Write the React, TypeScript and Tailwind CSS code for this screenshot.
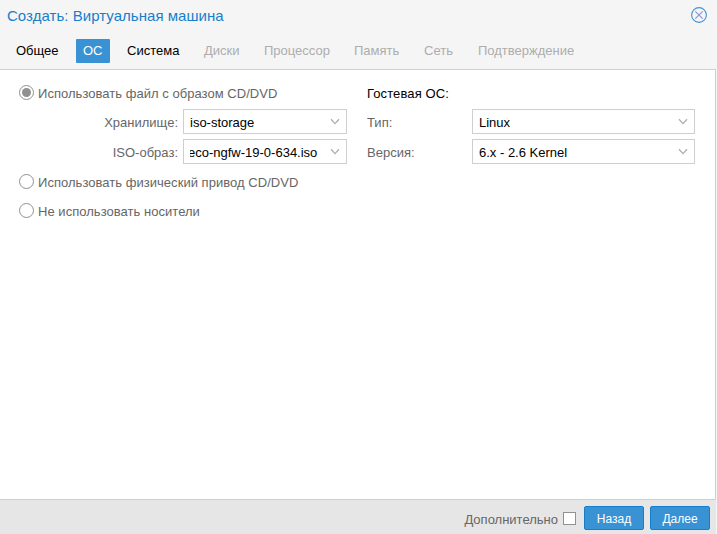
import React from 'react';

function Chevron() {
  return (
    <svg className="absolute right-[6px] top-[8px]" width="10" height="7" viewBox="0 0 10 7" fill="none">
      <path d="M1 1.2 L5 5.6 L9 1.2" stroke="#adadad" strokeWidth="1.3" />
    </svg>
  );
}

function Select({ value, width, scrolled }: { value: string; width: string; scrolled?: boolean }) {
  return (
    <div className={`relative h-[25px] shrink-0 border border-[#cfcfcf] bg-white pl-[6px] text-black ${width}`}>
      <div className="h-[23px] w-[132px] overflow-hidden leading-[25px]">
        <span className={scrolled ? '-ml-[2px]' : ''}>{value}</span>
      </div>
      <Chevron />
    </div>
  );
}

function Radio({ label, checked }: { label: string; checked?: boolean }) {
  return (
    <div className="flex h-[15px] items-center">
      <span className="flex size-[15px] shrink-0 items-center justify-center rounded-full border border-[#919191] bg-white">
        {checked && <span className="size-[9px] rounded-full bg-[#919191]" />}
      </span>
      <span className="ml-[4px] mt-[2px] tracking-[0.035px]">{label}</span>
    </div>
  );
}

const tabs = [
  { label: 'Общее', box: 'ml-[9px] w-[57px] text-black' },
  { label: 'ОС', box: 'ml-[10px] w-[34px] rounded-[1px] bg-[#3892d4] text-white' },
  { label: 'Система', box: 'ml-[10px] w-[67px] text-black' },
  { label: 'Диски', box: 'ml-[10px] w-[50px] text-[#adadad]' },
  { label: 'Процессор', box: 'ml-[10px] w-[80px] text-[#adadad]' },
  { label: 'Память', box: 'ml-[10px] w-[60px] text-[#adadad]' },
  { label: 'Сеть', box: 'ml-[10px] w-[44px] text-[#adadad]' },
  { label: 'Подтверждение', box: 'ml-[10px] w-[111px] text-[#adadad]' },
];

export default function App() {
  return (
    <div className="flex h-[534px] w-[717px] flex-col overflow-hidden whitespace-nowrap bg-[#f5f5f5] font-['Liberation_Sans',Arial,sans-serif] text-[13px] leading-[15px] text-[#666666]">
      <header className="flex h-[39px] shrink-0 justify-between pl-[7px] pr-[10px] pt-[7px]">
        <h1 className="text-[15px] leading-[18px] tracking-[0.04px] text-[#157fcc]">Создать: Виртуальная машина</h1>
        <svg width="16" height="16" viewBox="0 0 16 16" fill="none">
          <circle cx="8" cy="8" r="7.4" stroke="#3f93d3" strokeWidth="1.1" />
          <path d="M4.3 4.3 L11.7 11.7 M11.7 4.3 L4.3 11.7" stroke="#8b94dc" strokeWidth="1.2" />
        </svg>
      </header>
      <nav className="flex h-[30px] shrink-0">
        {tabs.map((tab) => (
          <div key={tab.label} className={`h-[24px] shrink-0 pl-[7px] leading-[24px] ${tab.box}`}>
            {tab.label}
          </div>
        ))}
      </nav>
      <main className="flex h-[431px] w-[716px] shrink-0 border-y border-r border-[#cfcfcf] bg-white pl-[19px] pt-[15px]">
        <section className="w-[348px] shrink-0">
          <Radio label="Использовать файл с образом CD/DVD" checked />
          <div className="mt-[9px] flex items-center">
            <span className="mr-[5px] mt-[2px] w-[159px] text-right">Хранилище:</span>
            <Select value="iso-storage" width="w-[164px]" />
          </div>
          <div className="mb-[10px] mt-[5px] flex items-center">
            <span className="mr-[5px] mt-[2px] w-[159px] text-right">ISO-образ:</span>
            <Select value="eco-ngfw-19-0-634.iso" width="w-[164px]" scrolled />
          </div>
          <Radio label="Использовать физический привод CD/DVD" />
          <div className="h-[14px]" />
          <Radio label="Не использовать носители" />
        </section>
        <section className="w-[328px] shrink-0">
          <div className="h-[15px] pt-[1px] tracking-[0.1px] text-black">Гостевая ОС:</div>
          <div className="mt-[9px] flex items-center">
            <span className="mt-[2px] w-[105px]">Тип:</span>
            <Select value="Linux" width="w-[223px]" />
          </div>
          <div className="mt-[5px] flex items-center">
            <span className="mt-[2px] w-[105px]">Версия:</span>
            <Select value="6.x - 2.6 Kernel" width="w-[223px]" />
          </div>
        </section>
      </main>
      <footer className="flex h-[34px] w-[716px] shrink-0 items-start justify-end bg-[#e6e6e6] pr-[6px] pt-[6px]">
        <span className="mr-[5px] mt-[6px]">Дополнительно</span>
        <span className="mr-[8px] mt-[6px] size-[13px] border border-[#919191] bg-white" />
        <button className="mr-[6px] h-[24px] w-[60px] rounded-[2px] border border-[#157fcc] bg-[#3892d4] text-[12px] leading-[24px] text-white">
          Назад
        </button>
        <button className="h-[24px] w-[60px] rounded-[2px] border border-[#157fcc] bg-[#3892d4] text-[12px] leading-[24px] text-white">
          Далее
        </button>
      </footer>
    </div>
  );
}
